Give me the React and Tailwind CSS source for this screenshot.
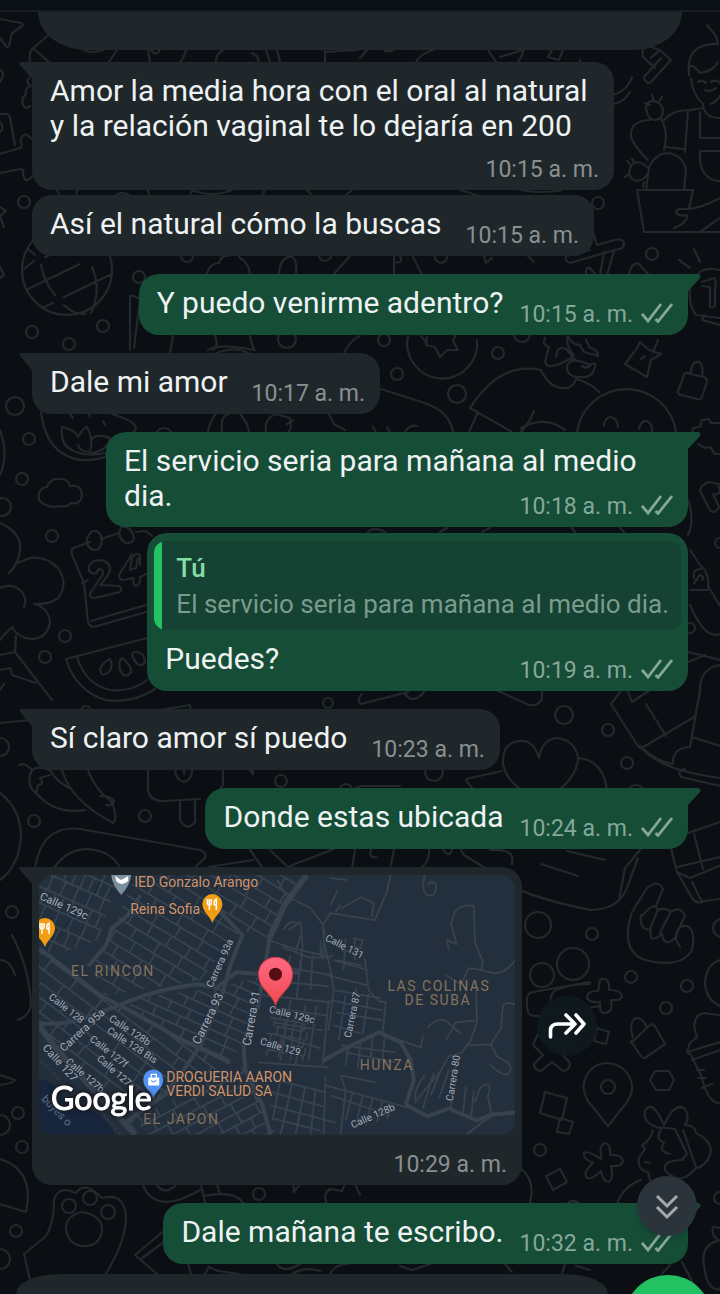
import React from "react";

const RINGS = [
  [24, 202, 6], [139, 277, 6], [103, 326, 6], [32, 332, 6], [69, 344, 6], [187, 256, 6], [325, 255, 6],
  [15, 406, 9], [29, 439, 6], [22, 479, 6], [2, 507, 9], [52, 536, 6], [65, 636, 6], [45, 657, 6],
  [598, 203, 6], [652, 254, 6], [441, 257, 6], [384, 340, 6], [498, 353, 6], [397, 374, 6], [457, 394, 9],
  [164, 436, 8], [287, 339, 9], [522, 334, 8], [690, 628, 5], [720, 543, 5], [564, 715, 9], [608, 730, 6],
  [627, 763, 6], [434, 772, 9], [281, 781, 6], [346, 790, 6], [145, 816, 6], [34, 821, 6], [0, 747, 9],
  [86, 711, 5], [538, 925, 13], [592, 934, 6], [573, 964, 16], [542, 975, 12], [631, 977, 6], [687, 986, 6],
  [666, 1008, 6], [608, 1087, 7], [540, 1150, 6], [722, 928, 9], [22, 1147, 6], [12, 912, 6], [0, 1125, 10],
  [259, 1194, 6], [16, 1231, 6], [0, 1259, 10], [69, 1206, 7], [90, 1198, 7], [108, 1212, 7], [720, 1198, 6],
  [636, 793, 8], [328, 703, 5], [18, 1113, 6], [574, 1208, 7],
];

const DOODLES = [
  "M0 19L21 23Q24 24 22 26L12 33L9 46Q7 48 5 45L0 38",
  "M52 32L32 49Q29 53 30 62M34 49L50 63",
  "M29 78Q25 82 31 86Q24 88 26 94Q21 98 23 105Q26 110 30 106",
  "M0 70Q4 72 3 76L0 82M0 114H6Q9 114 10 118L15 145M0 122Q5 127 0 132",
  "M0 154L20 148Q23 147 21 143Q20 136 26 134L32 139M0 173L21 169Q24 169 23 173Q24 181 28 180L34 175",
  "M0 207L6 211L0 216L4 227M0 267L4 275L0 278",
  "M84 50Q92 54 103 50M117 50L109 62M148 50L150 62M186 50Q184 58 180 62M151 50Q156 57 160 50M223 50Q216 54 216 62M277 50L280 62M266 50L270 62M252 53Q258 56 259 62M325 50V62M325 52L358 50",
  "M367 50L360 58M393 50Q388 53 384 50M433 50Q420 54 416 62M488 50L496 62M500 57L523 50Q524 53 518 62M552 50L548 57L559 60L563 50",
  "M57 190L60 196M77 190L76 196M115 196Q122 190 130 196M148 190L149 196M190 196L192 190M192 190Q212 198 232 190M265 190L262 196M307 190L313 196M345 196L352 190M460 190L480 196M520 190Q545 194 562 190",
  "M112 270A45 45 0 1 1 22 270A45 45 0 1 1 112 270M24 269L34 261M45 257L82 243M28 289L80 264M41 265Q44 282 55 295M92 267Q102 290 91 313M64 297L112 274M42 308L53 303M64 305Q74 315 86 314M102 246L99 253M35 255L28 249",
  "M130 350V297Q130 295 134 296L140 299L134 348M173 336L170 353M207 275Q208 264 219 263Q222 254 229 256M239 257Q250 264 250 275",
  "M279 275Q279 260 290 256Q298 258 296 275M350 256L333 275M394 256V275M394 262Q404 264 400 256M413 257L422 275M484 256L486 263L492 258M528 256L534 262M208 350Q216 343 255 350M214 354Q236 345 250 354M215 336Q219 345 213 350M250 336Q252 347 255 350M344 353Q350 340 360 336",
  "M632 77A27 27 0 1 1 580 60M613 104Q623 103 630 92M643 57Q640 46 651 47L660 50L671 60L650 83Q645 83 644 77L661 58M655 68L643 57M660 50L651 58",
  "M707 25L716 36L718 44M689 75Q685 43 718 44M689 75Q688 58 700 73Q714 71 718 62M691 78Q692 94 703 104Q704 118 720 118M698 82Q702 79 706 83M705 90Q710 93 716 88M711 82Q716 79 720 83M720 96Q715 103 711 104",
  "M664 120Q672 110 690 110L703 108M688 110L685 152M700 112V138H720M665 147L684 149M720 151H700V160Q702 180 720 181",
  "M647 112Q644 104 651 101Q661 101 663 110Q663 120 654 120Q648 119 647 112M650 105L645 103M654 101L652 95M659 102L662 97M649 120Q630 121 631 136Q632 144 648 160M661 119Q669 132 664 150M646 190L649 167Q656 153 668 153Q683 155 686 170L684 190M637 190H693L689 209M637 190L644 232H720M720 198Q702 208 688 209Q677 208 676 212Q678 217 687 215Q688 223 674 228M720 218L700 232",
  "M647 167Q637 158 631 166Q626 177 636 181Q645 180 647 174M630 164L627 161M629 174L625 177M635 163L632 159M644 182L643 187",
  "M594 235L597 245L615 240Q624 238 624 244L622 248L570 263Q564 261 566 256L590 250M604 252L600 275M614 251L607 275M586 275Q585 267 590 268L596 275M629 275Q630 264 638 263L649 275M679 260L690 268M694 249L700 262",
  "M720 270Q699 266 696 278L690 286Q688 305 696 315L720 318M702 282L714 278Q717 280 715 288V306Q708 310 710 302V287L702 286M720 325L702 320L704 315",
  "M477 340A35 35 0 1 1 408 336M427 337L426 345L435 347L440 357L447 350L458 350L453 341L455 336M421 336Q430 347 426 344",
  "M545 338Q542 345 549 347L546 358Q542 370 560 364L573 357L566 349Q557 345 556 357M568 336Q572 345 580 345L584 352L598 356Q598 349 590 348L586 340M568 336Q565 346 574 355M570 362Q576 358 590 365Q598 360 594 370Q592 378 580 377Q567 377 567 367Q567 362 575 359M582 366Q586 369 590 366M541 370Q550 390 568 388Q576 384 576 378M577 379Q592 384 599 392M541 370Q500 361 470 408M470 408L512 432M478 412L469 432M534 411L530 420L521 432M521 428Q545 415 565 430",
  "M634 352L625 364L647 377L651 360L661 354L649 350L640 342L636 350M653 352L658 340M641 359L645 356",
  "M687 373L703 377Q707 378 707 382L702 397Q701 400 697 399L681 395Q677 394 678 391L684 375Q685 372 689 373M691 372Q692 361 699 362Q704 365 702 376",
  "M577 432A50 50 0 0 1 676 432M604 426Q605 417 611 417Q617 418 618 427M639 429Q641 420 647 421Q653 424 652 432M720 423L711 423L709 419L702 420L700 427L693 428L692 434M698 444L705 448L710 447L715 454H720",
  "M381 389L425 403Q450 412 453 432M404 433Q410 424 417 426M373 427L376 432M387 427L390 432M720 484L708 482Q700 486 700 491L710 510Q715 515 719 507L713 494Q723 496 718 485",
  "M41 412Q45 442 62 453Q80 465 105 457L111 449M64 444Q80 460 109 452M62 427Q76 430 78 437Q85 426 87 427Q94 440 90 452Q80 452 78 445M62 427Q60 445 72 450M91 440Q95 433 110 438Q108 450 92 453M70 414L73 418M88 412L90 416M103 421L105 425M112 414Q136 421 136 429Q134 433 129 434",
  "M60 506Q47 509 39 500Q37 488 47 487Q50 478 60 479Q69 479 70 486Q81 484 82 495Q81 505 71 503Q66 508 60 506Z",
  "M0 430Q9 455 0 475M0 523Q27 535 18 559Q13 570 9 573M18 563Q40 550 58 568Q69 584 58 598Q48 605 34 604Q49 608 50 622Q48 638 32 639Q18 638 12 627L3 636L0 640M0 588Q12 583 20 590Q28 598 24 607M0 655L15 652L16 636M15 652L52 700M0 670L10 668L12 675L36 683M0 690L4 684",
  "M90 542L76 547Q70 548 72 555L84 583L88 622Q91 629 97 626L146 612M146 605L91 621M82 583L88 580M101 539L119 533M136 532L146 531L152 536M91 532Q100 528 102 540Q101 551 94 550Q86 548 87 538ZM121 527Q131 525 134 538Q132 544 126 543Q120 540 119 533Z",
  "M89 570Q88 562 98 560Q110 560 110 570Q108 577 100 585L119 586Q123 588 120 592L95 598Q88 598 91 592L103 574Q103 569 99 569L96 573Q91 575 89 570M132 554L119 575Q119 580 124 580L133 578L134 585Q139 587 140 581V577L146 574M140 555Q136 552 132 558L130 570L136 568L138 558M140 555V565",
  "M66 659L147 638M66 659Q75 690 105 700Q132 704 155 689M77 657Q86 685 110 690Q132 692 147 680M100 669Q104 661 110 659Q113 665 110 671Q101 679 100 669M120 670Q118 662 122 658Q132 666 131 672Q125 680 120 670M132 654Q135 649 143 655Q148 666 139 665Q134 662 132 654",
  "M208 432Q210 420 216 414M222 432Q220 415 229 414M240 414Q248 423 249 432M266 432Q264 418 276 414L290 418Q292 428 289 432M293 420L287 424M329 414L334 424L345 430M368 532Q374 526 385 532M482 532L490 528M440 532L447 528M575 532L572 528M620 528L624 532",
  "M688 500Q695 520 688 535M690 550L700 565L705 570Q710 580 708 590L690 590M694 578Q692 569 701 569M702 580Q705 577 700 575L694 583M708 586L720 606M690 605Q705 640 720 634M688 652L720 660M720 665Q700 668 700 690L699 700M688 662L705 655",
  "M361 704L408 692M361 704Q356 700 362 694M405 694Q413 705 424 692M496 690L529 705Q540 706 542 698V690M620 692L611 704L638 746Q640 750 645 746L694 717M646 704L666 736M628 692L632 702L650 690M700 690L690 747M645 750Q657 761 673 764M692 737L720 746M690 747Q672 748 673 764M640 746Q658 770 720 778M720 786L681 777Q676 770 685 769",
  "M539 758Q534 740 520 741Q502 742 503 764Q507 782 524 791H558Q578 775 578 757Q574 739 556 738Q542 740 539 758M502 771L470 778Q464 778 468 783L474 790M578 758Q603 760 607 790M355 788L362 786H400",
  "M0 723L30 720M19 765Q25 762 32 770M32 770Q40 765 51 771Q55 780 69 788M32 770Q25 785 36 793L38 785Q45 785 40 778L50 775M36 793Q55 815 85 810M62 770Q70 800 113 823Q118 820 112 802Q95 790 88 770M100 796Q112 796 114 801Q112 806 106 805",
  "M148 770V790Q150 802 165 801L200 799M223 770V785L215 796M175 770Q176 780 184 782Q192 780 192 770M184 768V774M180 801V820Q187 832 195 822V800M160 710L190 705Q192 709 185 713M250 770L253 774V770",
  "M0 793Q20 808 21 835Q20 865 0 880M35 868Q42 824 80 829L200 850Q207 852 205 858L194 868M54 868Q70 845 95 850Q112 853 120 868M208 867L253 860M250 850L262 867M270 850L288 867L300 862L334 849M355 850L352 868",
  "M371 850Q368 858 376 857M394 850L390 868M429 850Q430 861 421 868M443 850Q450 858 452 850M461 850L464 855L485 868M490 850Q516 848 512 864M567 851L605 860M541 864L578 876M640 850L625 868L619 900M671 848Q675 865 677 872L690 878L719 866M694 834L703 869M685 834L720 822M720 857L677 867M677 872L692 898Q697 905 704 901L720 899M692 882L702 902",
  "M514 885Q521 895 590 910Q620 910 628 885L638 858",
  "M641 915Q639 930 651 930Q648 945 662 934Q664 948 675 938Q680 926 685 916Q680 905 671 912Q662 906 658 911Q655 900 643 915M663 889Q658 879 647 888L632 912Q620 948 642 959Q680 970 692 950Q696 930 687 926Q675 925 676 940L680 947M663 889L656 906M671 911L660 933M657 912L650 929",
  "M528 1012Q524 993 533 992L590 982M528 1012Q530 1018 545 1015L600 1006M551 1010Q548 995 556 990Q570 984 590 984M600 980Q607 976 609 985V990Q621 990 622 996Q621 1001 611 1000Q613 1013 605 1013Q599 1014 600 1002Q588 1003 587 997Q587 991 598 991Z",
  "M538 1034L553 1046L564 1036Q572 1036 570 1042L562 1054L570 1063Q570 1070 563 1071L552 1062L541 1071Q534 1070 534 1064L543 1055L533 1045ZM597 1028L609 1032L606 1044L594 1041Z",
  "M608 1126L588 1101Q582 1091 584 1082Q590 1063 608 1063Q627 1065 632 1084Q633 1093 627 1102ZM631 1043L650 1025Q653 1023 656 1028L665 1044L645 1058Q642 1058 640 1055L631 1041M633 1038Q628 1022 636 1018Q643 1018 646 1026M655 1071H669L674 1080L669 1090H656L650 1080Z",
  "M545 1092L567 1098L562 1120L540 1113ZM560 1118L573 1122L569 1134L557 1132ZM546 1176L560 1169L567 1182L553 1190Z",
  "M601 1155Q599 1145 605 1143Q611 1144 610 1155Q621 1154 623 1161Q622 1167 611 1166Q614 1178 609 1182Q603 1182 601 1171Q592 1180 587 1178Q582 1173 593 1163Q582 1158 584 1153Q588 1150 601 1159Z",
  "M660 1128Q642 1123 645 1111Q652 1098 664 1125Q675 1101 685 1109Q690 1118 685 1125Q695 1125 696 1133Q714 1142 710 1155Q706 1166 695 1169Q680 1187 665 1170Q663 1160 682 1160L687 1154L675 1129Q660 1127 660 1128M661 1129Q655 1140 664 1142Q658 1152 670 1154M653 1130Q651 1140 642 1145L645 1149L639 1158Q637 1170 648 1172L650 1180M641 1180Q625 1185 617 1203M683 1130L696 1167M650 1163L645 1162",
  "M720 1103Q708 1104 701 1075L691 1055L687 1052L690 1043L697 1037L694 1026Q696 1010 710 1014L720 1015M687 1052L720 1042M692 1060L720 1050M697 1070L704 1070M698 1078H706M702 1088L712 1084M720 960Q705 965 705 985Q707 1000 720 1006",
  "M520 1168Q536 1180 530 1203M568 1203Q572 1199 577 1203M720 1240Q700 1245 704 1265Q706 1288 718 1290L720 1288M713 1227L720 1228M713 1227Q711 1235 718 1240M565 1264L562 1274M576 1266L590 1270M670 1265L662 1274M682 1262L694 1285",
  "M30 1280L24 1254L45 1237Q54 1225 54 1200Q58 1185 76 1193Q85 1180 102 1198Q126 1192 126 1220Q124 1245 105 1275M66 1230Q65 1215 83 1212Q103 1216 102 1231Q99 1247 83 1246Q69 1245 66 1230M0 1159Q35 1170 26 1212L0 1204M143 1184Q147 1200 165 1202Q180 1202 200 1190M156 1184Q165 1197 177 1184M201 1184L205 1203M217 1184L220 1194M203 1196Q235 1190 243 1203M293 1184L294 1192L300 1184M327 1203Q322 1195 330 1189L342 1191L345 1184M355 1184L360 1195",
  "M165 1230L135 1255L157 1274M172 1236L142 1258M188 1264L191 1274M205 1274L209 1267L218 1271L240 1274M277 1264Q284 1274 300 1264M292 1274Q305 1266 320 1271M330 1274Q335 1264 348 1264M400 1266L412 1270L430 1264M505 1264L512 1272",
  "M12 935Q30 970 31 1005Q30 1015 18 1020M0 1075L15 1080Q14 1083 0 1085M0 960Q10 960 15 975",
];

function Wallpaper() {
  return (
    <svg
      aria-hidden="true"
      className="absolute inset-0 h-full w-full"
      viewBox="0 0 720 1294"
      preserveAspectRatio="xMidYMin slice"
      fill="none"
      stroke="#22282c"
      strokeWidth="2.2"
      strokeLinecap="round"
      strokeLinejoin="round"
    >
      {RINGS.map(([x, y, r]) => (
        <circle key={`${x}-${y}`} cx={x} cy={y} r={r} />
      ))}
      {DOODLES.map((d) => (
        <path key={d} d={d} />
      ))}
    </svg>
  );
}

function Checks() {
  return (
    <svg
      role="img"
      aria-label="Entregado"
      className="mb-1 h-5 w-8"
      viewBox="0 0 32 20"
      fill="none"
      stroke="#86a899"
      strokeWidth="2.8"
    >
      <path d="M1 11L7 18L20 1M14.5 16L17 18.5L31 1" />
    </svg>
  );
}

function Tail({ out }) {
  return out ? (
    <svg aria-hidden="true" className="absolute top-0 -right-[13px] h-5 w-[15px]" viewBox="0 0 15 20" fill="#154d37">
      <path d="M0 0H12Q15.500 0.500 14 4L2 17V20H0Z" />
    </svg>
  ) : (
    <svg aria-hidden="true" className="absolute top-0 -left-[13px] h-5 w-[15px]" viewBox="0 0 15 20" fill="#20272b">
      <path d="M15 0H3Q-1 0 1 3L13 17V20H15Z" />
    </svg>
  );
}

function Time({ out, children }) {
  return (
    <span className="flex shrink-0 items-center gap-2">
      <time className={out ? "text-[23px] leading-7 text-[#86a899]" : "text-[23px] leading-7 text-[#8a8f92]"}>
        {children}
      </time>
      {out && <Checks />}
    </span>
  );
}

function Bubble({ out, tail, className = "", children }) {
  const side = out
    ? "self-end mr-8 bg-[#154d37] rounded-[20px]" + (tail ? " rounded-tr-none" : "")
    : "self-start ml-8 bg-[#20272b] rounded-[20px]" + (tail ? " rounded-tl-none" : "");
  return (
    <article className={`relative ${side} ${className}`}>
      {tail && <Tail out={out} />}
      {children}
    </article>
  );
}

function Line({ out, tail, time, className = "", children }) {
  return (
    <Bubble out={out} tail={tail} className={className}>
      <div className={`flex items-end pt-[11px] pr-[15px] pl-[18px] ${out ? "gap-4" : "gap-6"}`}>
        <p className="pb-[15px] text-[30px] leading-[35px] whitespace-nowrap">{children}</p>
        <div className="pb-[6px]">
          <Time out={out}>{time}</Time>
        </div>
      </div>
    </Bubble>
  );
}

const MAIN_ROADS = [
  "M39 948L70 972L103 997L135 1013L182 1040L230 1062",
  "M39 1023Q70 1026 100 1012L142 996Q165 988 197 984L217 987L236 972L262 974L300 972",
  "M39 1025L56 1048L90 1086L135 1134",
  "M306 875L284 905L269 938L263 975L258 1005L243 1042L245 1070L262 1105L270 1134",
  "M140 895L128 915L112 928L106 945L88 966",
  "M218 910L242 935L230 965L222 993L200 1045L168 1092L125 1122",
  "M323 1060L345 1048L378 1032L400 1042L410 1060L413 1080L405 1104",
  "M405 1104L427 1116L448 1108L476 1120L490 1114L514 1112",
];

const MINOR_ROADS = [
  "M277 880L286 896L310 908L322 924L324 945L330 970L333 990",
  "M390 875L386 892L374 920L330 913L323 924M340 909L360 897L373 903L371 917",
  "M424 875Q420 890 426 895Q436 898 435 884Q430 880 427 885M448 950L446 940L456 944L450 924L454 912Q460 903 473 906L474 942L482 962L480 970L493 973Q504 974 514 960M482 970L468 968L460 984L445 975",
  "M333 960L368 970M326 975L366 985M364 958L368 990L378 1001L385 1002L382 1034L420 1047L422 1036",
  "M427 1027Q440 1013 450 1025L461 1034M445 1040L455 1022L475 1020M475 980L476 1022L470 1040L461 1052L448 1056L440 1070L414 1102",
  "M465 1045L490 1044L500 1028L502 1006Q504 1001 514 1004M490 1044L496 1056L507 1062Q513 1070 506 1074Q500 1075 488 1063M474 1102L478 1090Q485 1080 489 1087L487 1096L491 1115M466 1134L481 1122L498 1112",
  "M288 930L300 922L302 945L300 970M283 930Q288 918 300 924M268 940L292 948L330 957M282 947L310 958L332 956M270 965L332 975M262 980L328 986M290 955L282 990M300 960L296 1000M312 955L310 990M320 940V955M262 995L330 1002M275 1008L326 1015M273 1022L322 1030M280 1036L320 1048M258 1062L328 1067M290 1000L280 1060M305 1005L295 1064M316 1005L308 1060M328 1000L322 1065",
  "M330 1000L382 1010M333 990L380 998M335 1012L382 1020M333 1025L360 1033M333 990L328 1030M345 995L338 1040M356 988L348 1030M368 993L362 1034M340 1045L395 1052M345 1052L395 1062M348 1045L345 1065M360 1040L357 1068M372 1036L370 1058M384 1038L382 1058",
  "M340 950L360 953M354 938V960M345 938L343 970M352 938L362 940L360 948L350 946M324 930L322 960M336 960L360 965M300 935L295 952",
  "M340 1075L375 1082M325 1075L323 1134M340 1075L345 1090L340 1134M325 1085L410 1108M330 1095L390 1115M352 1092L345 1120M362 1095L355 1125M372 1098L365 1125M382 1100L376 1122M392 1105L386 1118",
  "M270 1078L325 1092M265 1090L322 1106M270 1105L335 1122M272 1118L320 1130M280 1078L272 1120M292 1082L280 1134M305 1085L295 1134M315 1088L310 1134",
  "M424 1075Q412 1090 415 1100M433 1072L422 1108M440 1070L430 1095M448 1070L438 1098M455 1065L450 1108M465 1085L462 1115M473 1090L470 1118",
  "M340 905L335 912M337 890L330 905M346 880L330 878",
];

function streetGrid(x0, y0, x1, y1, step, cross) {
  const parts = [];
  let row = 0;
  for (let y = y0; y < y1; y += step) {
    parts.push(`M${x0 + ((row * 37) % 23)} ${y}H${x1 - ((row * 29) % 31)}`);
    for (let x = x0 + ((row * 17) % cross); x < x1; x += cross + ((row * 5) % 9)) {
      parts.push(`M${x} ${y}v${step}`);
    }
    row += 1;
  }
  return parts.join("");
}

const GRIDS = [
  { clip: "M39 875H120L98 940L39 960Z", rotate: "rotate(24 70 900)", d: streetGrid(0, 840, 150, 1000, 15, 8) },
  { clip: "M135 875H300L265 938L240 930L200 980L105 995L90 966L115 925Z", rotate: "rotate(31 180 920)", d: streetGrid(50, 830, 330, 1030, 12, 22) },
  { clip: "M39 950L105 1000L230 1062L165 1094L133 1130L39 1023Z", rotate: "rotate(37 110 1040)", d: streetGrid(0, 940, 270, 1160, 12, 29) },
  { clip: "M142 997L215 988L262 976L243 1045L228 1060L120 1010Z", rotate: "rotate(24 190 1020)", d: streetGrid(90, 950, 300, 1080, 10, 18) },
  { clip: "M140 1115L245 1065L275 1134H140Z", rotate: "rotate(-28 200 1100)", d: streetGrid(100, 1040, 320, 1180, 11, 17) },
  { clip: "M270 1010L315 1018L308 1062L262 1055Z", rotate: "rotate(10 290 1035)", d: streetGrid(255, 1005, 325, 1065, 8, 9) },
];

const STREETS = [
  ["Calle 129c", 39, 899, 24, 11], ["Calle 128", 48, 998, 38, 10], ["Carrera 95a", 64, 1052, -43, 11],
  ["Calle 128b", 108, 1020, 33, 10], ["Calle 128 Bis", 106, 1032, 33, 10], ["Calle 127f", 89, 1040, 38, 10],
  ["Calle 127a", 96, 1059, 41, 10], ["Calle 127b", 65, 1062, 41, 10], ["Calle 127", 42, 1048, 48, 11],
  ["Carrera 93a", 212, 988, -66, 10], ["Carrera 93", 199, 1045, -64, 12], ["Carrera 91", 250, 1046, -80, 12],
  ["Calle 131", 324, 940, 27, 10], ["Calle 129c", 268, 1012, 14, 10], ["Calle 129", 259, 1044, 16, 10],
  ["Carrera 87", 350, 1038, -78, 10], ["Carrera 80", 452, 1101, -81, 10], ["Calle 128b", 352, 1128, -24, 10],
];

function Fork({ x, y }) {
  return (
    <g transform={`translate(${x} ${y})`}>
      <path d="M0 19C-2 12-10 8-10 0A10 10 0 1 1 10 0C10 8 2 12 0 19Z" fill="#f29d12" />
      <path d="M-5-5V-1Q-5 1-3 1V6M-3-5V0M-1-5V-1Q-1 1-3 1M4 6V-5Q1-4 2 1H4" fill="none" stroke="#fff" strokeWidth="1.5" />
    </g>
  );
}

function MapPreview() {
  return (
    <svg
      role="img"
      aria-label="Mapa de la ubicación"
      className="block w-full rounded-[14px]"
      viewBox="39 875 475 259"
      fontFamily="Roboto, sans-serif"
    >
      <rect x="39" y="875" width="475" height="259" fill="#242f3d" />
      <path d="M39 1078Q54 1080 65 1100Q105 1110 115 1134H39Z" fill="#17263c" />
      <path d="M39 1060Q55 1072 65 1088Q90 1100 102 1112L120 1134" fill="none" stroke="#37424f" strokeDasharray="4 2" />
      <path d="M99 875Q100 893 82 905L62 930" fill="none" stroke="#17263c" />
      {GRIDS.map((g, i) => (
        <g key={g.clip} clipPath={`url(#district-${i})`}>
          <clipPath id={`district-${i}`}>
            <path d={g.clip} />
          </clipPath>
          <path d={g.d} transform={g.rotate} fill="none" stroke="#37424f" strokeWidth="1.8" />
        </g>
      ))}
      <g fill="none" stroke="#37424f" strokeLinejoin="round">
        {MINOR_ROADS.map((d) => (
          <path key={d} d={d} strokeWidth="1.8" />
        ))}
        {MAIN_ROADS.map((d) => (
          <path key={d} d={d} strokeWidth="4" />
        ))}
        <path d="M306 875L284 905L269 938M39 1025L56 1048L90 1086L135 1134" strokeWidth="6" />
      </g>
      <g fill="#a3acb8" stroke="#242f3d" strokeWidth="2" paintOrder="stroke">
        {STREETS.map(([name, x, y, angle, size]) => (
          <text key={`${name}-${x}`} fontSize={size} transform={`translate(${x} ${y}) rotate(${angle})`}>
            {name}
          </text>
        ))}
      </g>
      <text fontSize="11" fill="#61728b" transform="translate(41 1099) rotate(46)">buyes o</text>
      <g fill="#85735b" fontSize="14" letterSpacing="1.5">
        <text x="71" y="976">EL RINCON</text>
        <text x="143" y="1123">EL JAPON</text>
        <text x="359" y="1070">HUNZA</text>
        <text x="438" y="991" textAnchor="middle">LAS COLINAS</text>
        <text x="437" y="1005" textAnchor="middle">DE SUBA</text>
      </g>
      <g fill="#d0946a" stroke="#242f3d" strokeWidth="2" paintOrder="stroke" fontSize="14">
        <text x="134" y="887">IED Gonzalo Arango</text>
        <text x="130" y="914">Reina Sofia</text>
        <text x="166" y="1082">DROGUERIA AARON</text>
        <text x="166" y="1096">VERDI SALUD SA</text>
      </g>
      <path d="M111 875Q112 885 121 895Q130 885 131 875Z" fill="#7b909d" />
      <path d="M115 876L121 880L128 876V881Q121 887 116 881Z" fill="#fff" />
      <Fork x={212} y={904} />
      <Fork x={45} y={928} />
      <path d="M153 1098C151 1090 143 1088 143 1079A10 10 0 1 1 163 1079C163 1088 155 1090 153 1098Z" fill="#5491f5" />
      <path d="M148 1077H159V1085H148Z" fill="#fff" />
      <path d="M151 1077V1074H156V1077" fill="none" stroke="#fff" strokeWidth="1.4" />
      <path d="M151 1080Q153 1083 156 1080" stroke="#5491f5" fill="none" />
      <defs>
        <linearGradient id="pin" x1="0" x2="0" y1="0" y2="1">
          <stop offset="0" stopColor="#ff6884" />
          <stop offset="1" stopColor="#f04b50" />
        </linearGradient>
      </defs>
      <path
        d="M275 1005C272 993 258 989 258 974A17 17 0 0 1 292 974C292 989 278 993 275 1005Z"
        fill="url(#pin)"
        stroke="#c93c43"
        strokeWidth="1"
      />
      <circle cx="275" cy="974" r="6.500" fill="#560d13" />
      <text
        x="51"
        y="1110"
        fontFamily="Lato, sans-serif"
        fontSize="32"
        fill="#fff"
        stroke="#fff"
        strokeWidth="1"
        className="[filter:drop-shadow(0_0_2px_#14181f)_drop-shadow(0_0_2px_#14181f)]"
      >
        Google
      </text>
    </svg>
  );
}

export default function App() {
  return (
    <main className="relative flex min-h-screen flex-col overflow-hidden bg-[#0b0f13] font-[Roboto,sans-serif] text-[#eef2f3]">
      <Wallpaper />
      <header className="relative h-3 border-b-2 border-[#171d21] bg-[#0b1014]" />
      <section aria-label="Conversación" className="relative flex flex-1 flex-col">
        <div className="mx-[38px] h-[38px] rounded-[0_0_48px_48px/0_0_38px_38px] bg-[#20272b]" />

        <Bubble tail className="mt-3 flex max-w-[582px] flex-col pt-[11px] pr-[15px] pb-[6px] pl-[18px]">
          <p className="text-[30px] leading-[35px]">
            Amor la media hora con el oral al natural y la relación vaginal te lo dejaría en 200
          </p>
          <div className="mt-[13px] self-end">
            <Time>10:15 a. m.</Time>
          </div>
        </Bubble>
        <Line time="10:15 a. m." className="mt-[5px]">Así el natural cómo la buscas</Line>
        <Line out tail time="10:15 a. m." className="mt-[18px]">Y puedo venirme adentro?</Line>
        <Line tail time="10:17 a. m." className="mt-[18px]">Dale mi amor</Line>

        <Bubble out tail className="mt-[18px] flow-root w-[582px] pt-[11px] pr-[15px] pb-[6px] pl-[18px]">
          <p className="text-[30px] leading-[35px]">
            El servicio seria para mañana al medio dia.
            <span className="float-right mt-[15px]">
              <Time out>10:18 a. m.</Time>
            </span>
          </p>
        </Bubble>

        <Bubble out className="mt-[6px] pt-2">
          <blockquote className="mx-[7px] flex overflow-hidden rounded-[12px] bg-[#154232]">
            <div className="w-2 shrink-0 bg-[#25c264]" />
            <div className="pt-[10px] pr-3 pb-2 pl-[14px]">
              <p className="text-[26px] leading-[35px] font-medium text-[#86dda6]">Tú</p>
              <p className="text-[26px] leading-9 whitespace-nowrap text-[#7a9c8e]">
                El servicio seria para mañana al medio dia.
              </p>
            </div>
          </blockquote>
          <div className="flex items-end justify-between pt-[11px] pr-[15px] pl-[18px]">
            <p className="pb-[15px] text-[30px] leading-[35px]">Puedes?</p>
            <div className="pb-[6px]">
              <Time out>10:19 a. m.</Time>
            </div>
          </div>
        </Bubble>

        <Line tail time="10:23 a. m." className="mt-[18px]">Sí claro amor sí puedo</Line>
        <Line out tail time="10:24 a. m." className="mt-[18px]">Donde estas ubicada</Line>

        <div className="mt-[18px] flex items-center gap-[15px]">
          <Bubble tail className="flex w-[490px] flex-col px-[7px] pt-2 pb-[6px]">
            <a href="#mapa" className="block">
              <MapPreview />
            </a>
            <div className="mt-4 mr-2 self-end">
              <Time>10:29 a. m.</Time>
            </div>
          </Bubble>
          <button
            type="button"
            aria-label="Reenviar"
            className="flex size-[60px] items-center justify-center rounded-full bg-[#0e191f]/90"
          >
            <svg className="h-7 w-10" viewBox="0 0 40 28" fill="none" stroke="#fff" strokeWidth="3.600" strokeLinecap="round" strokeLinejoin="round">
              <path d="M3.500 25V18Q4 12 11 12H27M19 3L28 12L19 21M29 3L37 12L29 21" />
            </svg>
          </button>
        </div>

        <Line out tail time="10:32 a. m." className="mt-[18px]">Dale mañana te escribo.</Line>

        <div className="mt-[10px] ml-4 h-5 w-[592px] max-w-full rounded-[44px_44px_0_0/20px_20px_0_0] bg-[#20272b]" />
      </section>

      <button
        type="button"
        aria-label="Ir al final"
        className="absolute right-[23px] bottom-[58px] flex size-[60px] items-center justify-center rounded-full bg-[#2b343b] shadow-md"
      >
        <svg className="h-7 w-6" viewBox="0 0 24 28" fill="none" stroke="#a3aaae" strokeWidth="3">
          <path d="M2 4L12 14L22 4M2 15L12 25L22 15" />
        </svg>
      </button>
      <button
        type="button"
        aria-label="Enviar"
        className="absolute right-2 -bottom-[69px] size-[88px] rounded-full bg-[#22c262]"
      />
    </main>
  );
}
